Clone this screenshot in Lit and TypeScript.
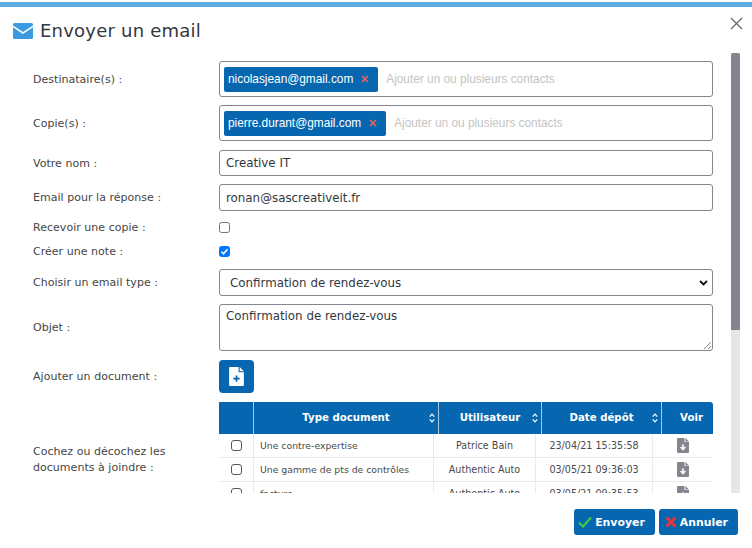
import { LitElement, html, css, svg } from "lit";
import { customElement } from "lit/decorators.js";

const sortIcon = html`<svg class="sort" width="6" height="10" viewBox="0 0 6 10"><path d="M.7 3.6 3 1.2l2.3 2.4M.7 6.4 3 8.8l2.3-2.4" fill="none" stroke="#fff" stroke-width="1.2"/></svg>`;
const fileDown = html`<svg width="12" height="15" viewBox="0 0 12 15"><path d="M0 1a1 1 0 0 1 1-1h6.5v4H12v10a1 1 0 0 1-1 1H1a1 1 0 0 1-1-1z" fill="#85858f"/><path d="M8.3 0 12 3.4H8.3z" fill="#85858f"/><path d="M6 6.2v5M3.6 9 6 11.6 8.4 9" fill="none" stroke="#fff" stroke-width="1.5"/></svg>`;

const rows = [
  ["Une contre-expertise", "Patrice Bain", "23/04/21 15:35:58"],
  ["Une gamme de pts de contrôles", "Authentic Auto", "03/05/21 09:36:03"],
  ["facture", "Authentic Auto", "03/05/21 09:35:53"],
];

@customElement("app-root")
export class AppRoot extends LitElement {
  static styles = css`
    :host { display: block; width: 752px; height: 548px; overflow: hidden; background: #fff; font-family: "DejaVu Sans", Verdana, sans-serif; color: #444; }
    .modal { height: 548px; padding-top: 2px; box-sizing: border-box; display: flex; flex-direction: column; }
    .bar { height: 5px; background: #5dade2; flex: none; }
    .head { flex: none; height: 46px; display: flex; align-items: center; padding: 0 9px 0 13px; box-sizing: border-box; }
    .head .env { margin-right: 7px; margin-top: 1px; }
    h1 { margin: 0; font-size: 18px; font-weight: 400; color: #33373d; flex: 1; letter-spacing: 0.22px; }
    .close { align-self: flex-start; margin-top: 10px; display: block; }
    .main { flex: none; height: 440px; display: flex; padding-left: 33px; }
    .form { width: 680px; height: 440px; overflow: hidden; flex: none; padding-top: 8px; box-sizing: border-box; }
    .row { display: grid; grid-template-columns: 186px 494px; align-items: center; margin-bottom: 8px; }
    .label { font-size: 11px; color: #454545; letter-spacing: 0.03px; }
    .box { box-sizing: border-box; border: 1.5px solid #85858f; border-radius: 3px; background: #fff; width: 494px; }
    .tags { height: 36px; display: flex; align-items: center; padding-left: 4px; font-family: "Liberation Sans", Arial, sans-serif; font-size: 11.85px; }
    .tag { background: #0667b0; color: #fff; height: 25px; border-radius: 2px; display: flex; align-items: center; padding: 0 9px 0 4px; gap: 8px; }
    .tag svg { display: block; }
    .ph { color: #c4c4c4; margin-left: 8px; }
    .input { height: 27px; display: flex; align-items: center; padding-left: 6px; font-size: 11.85px; color: #33373d; }
    .input.short { height: 26px; }
    .gap9 { margin-bottom: 9px; }
    .check-row { height: 16px; margin-bottom: 8px; }
    .check-row.last { margin-bottom: 10px; }
    .cb { box-sizing: border-box; width: 11px; height: 11px; border: 1px solid #767676; border-radius: 2.5px; background: #fff; display: block; }
    .cb.on { background: #0075ff; border-color: #0075ff; display: flex; align-items: center; justify-content: center; }
    .select { height: 27px; display: flex; align-items: center; justify-content: space-between; padding: 0 4px 0 10px; font-size: 11.85px; color: #33373d; }
    .area { height: 47px; padding: 4px 6px; font-size: 11.85px; color: #33373d; position: relative; line-height: 15px; }
    .grip { position: absolute; right: 0; bottom: 0; }
    .add { width: 35px; height: 33px; background: #0667b0; border-radius: 4px; display: flex; align-items: center; justify-content: center; }
    .tablerow { align-items: center; margin-bottom: 0; }
    .tablerow .label { line-height: 16px; width: 150px; margin-top: 12px; }
    .table { width: 494px; }
    .thead { display: grid; grid-template-columns: 34px 185px 103px 120px 52px; height: 32px; background: #0667b0; color: #fff; font-size: 10.2px; font-weight: 700; border-radius: 0 3px 0 0; }
    .th { display: flex; align-items: center; justify-content: center; position: relative; border-left: 1px solid #a8c8e2; box-sizing: border-box; padding-bottom: 1px; }
    .th:first-child { border-left: 0; }
    .th:last-child { padding-left: 8px; }
    .sort { position: absolute; right: 3px; top: 11px; }
    .tr { display: grid; grid-template-columns: 34px 180px 102px 117px 61px; height: 24px; font-size: 9.6px; color: #4a4a4a; border-bottom: 1px solid #eaeaea; box-sizing: border-box; }
    .tr:first-of-type { margin-top: 0; }
    .td { display: flex; align-items: center; justify-content: center; border-left: 1px solid #eaeaea; box-sizing: border-box; }
    .td:first-child { border-left: 0; }
    .td.l { justify-content: flex-start; padding-left: 6px; font-size: 9.3px; }
    .rcb { box-sizing: border-box; width: 11px; height: 11px; border: 1.5px solid #555; border-radius: 3px; }
    .scroll { margin-left: 18px; width: 9px; height: 440px; background: #e6e6e6; flex: none; }
    .thumb { height: 277px; background: #85858f; border-radius: 2px 2px 0 0; }
    .foot { flex: 1; display: flex; justify-content: flex-end; align-items: flex-start; padding: 16px 14px 0 0; gap: 4px; }
    .btn { height: 26px; border-radius: 3px; background: #0667b0; color: #fff; font-size: 10.9px; font-weight: 700; display: flex; align-items: center; box-sizing: border-box; gap: 3px; padding: 0 10px 0 4px; }
    .btn.cancel { padding-left: 6px; }
  `;

  render() {
    return html`<div class="modal">
      <div class="bar"></div>
      <div class="head">
        <svg class="env" width="20" height="16" viewBox="0 0 20 16"><path d="M1.5 0h17A1.5 1.5 0 0 1 20 1.5v.9L10 9 0 2.4v-.9A1.5 1.5 0 0 1 1.500 0z" fill="#3a9ae0"/><path d="M0 4.300 10 11l10-6.700v10.200a1.500 1.500 0 0 1-1.500 1.500h-17A1.500 1.500 0 0 1 0 14.500z" fill="#3a9ae0"/></svg>
        <h1>Envoyer un email</h1>
        <svg class="close" width="13" height="13" viewBox="0 0 13 13"><path d="M1 1l11 11M12 1 1 12" stroke="#666" stroke-width="1.2" fill="none"/></svg>
      </div>
      <div class="main">
        <div class="form">
          <div class="row"><div class="label">Destinataire(s) :</div>
            <div class="box tags"><span class="tag">nicolasjean@gmail.com ${this.x()}</span><span class="ph">Ajouter un ou plusieurs contacts</span></div></div>
          <div class="row gap9"><div class="label">Copie(s) :</div>
            <div class="box tags"><span class="tag">pierre.durant@gmail.com ${this.x()}</span><span class="ph">Ajouter un ou plusieurs contacts</span></div></div>
          <div class="row"><div class="label">Votre nom :</div><div class="box input short">Creative IT</div></div>
          <div class="row"><div class="label">Email pour la réponse :</div><div class="box input">ronan@sascreativeit.fr</div></div>
          <div class="row check-row"><div class="label">Recevoir une copie :</div><span class="cb"></span></div>
          <div class="row check-row last"><div class="label">Créer une note :</div>
            <span class="cb on"><svg width="9" height="9" viewBox="0 0 9 9"><path d="M1.500 4.800 3.500 6.800 7.500 2.200" stroke="#fff" stroke-width="1.600" fill="none"/></svg></span></div>
          <div class="row"><div class="label">Choisir un email type :</div>
            <div class="box select">Confirmation de rendez-vous
              <svg width="9" height="6" viewBox="0 0 9 6"><path d="M1 1l3.500 3.500L8 1" stroke="#111" stroke-width="1.800" fill="none"/></svg></div></div>
          <div class="row gap9"><div class="label">Objet :</div>
            <div class="box area">Confirmation de rendez-vous
              <svg class="grip" width="9" height="9" viewBox="0 0 9 9"><path d="M1 8 8 1M5 8 8 5" stroke="#888" stroke-width="1" fill="none"/></svg></div></div>
          <div class="row gap9"><div class="label">Ajouter un document :</div>
            <div class="add"><svg width="15" height="19" viewBox="0 0 14 18"><path d="M1 0h8v5h5v12a1 1 0 0 1-1 1H1a1 1 0 0 1-1-1V1a1 1 0 0 1 1-1z" fill="#fff"/><path d="M10 0l4 4h-4z" fill="#fff"/><path d="M7 8v6M4 11h6" stroke="#0667b0" stroke-width="1.600"/></svg></div></div>
          <div class="row tablerow"><div class="label">Cochez ou décochez les documents à joindre :</div>
            <div class="table">
              <div class="thead"><div class="th"></div><div class="th">Type document${sortIcon}</div><div class="th">Utilisateur${sortIcon}</div><div class="th">Date dépôt${sortIcon}</div><div class="th">Voir</div></div>
              ${rows.map(r => html`<div class="tr"><div class="td"><span class="rcb"></span></div><div class="td l">${r[0]}</div><div class="td">${r[1]}</div><div class="td">${r[2]}</div><div class="td">${fileDown}</div></div>`)}
            </div></div>
        </div>
        <div class="scroll"><div class="thumb"></div></div>
      </div>
      <div class="foot">
        <div class="btn"><svg width="14" height="12" viewBox="0 0 14 12"><path d="M1 6.500 5 10.500 13 1.500" stroke="#3ec93e" stroke-width="2.200" fill="none"/></svg>Envoyer</div>
        <div class="btn cancel"><svg width="12" height="12" viewBox="0 0 12 12"><path d="M1.500 1.500l9 9M10.500 1.500l-9 9" stroke="#e8353b" stroke-width="3" fill="none"/></svg>Annuler</div>
      </div>
    </div>`;
  }

  x() {
    return html`<svg width="8" height="8" viewBox="0 0 8 8">${svg`<path d="M1 1l6 6M7 1 1 7" stroke="#f0625e" stroke-width="1.700" fill="none"/>`}</svg>`;
  }
}
